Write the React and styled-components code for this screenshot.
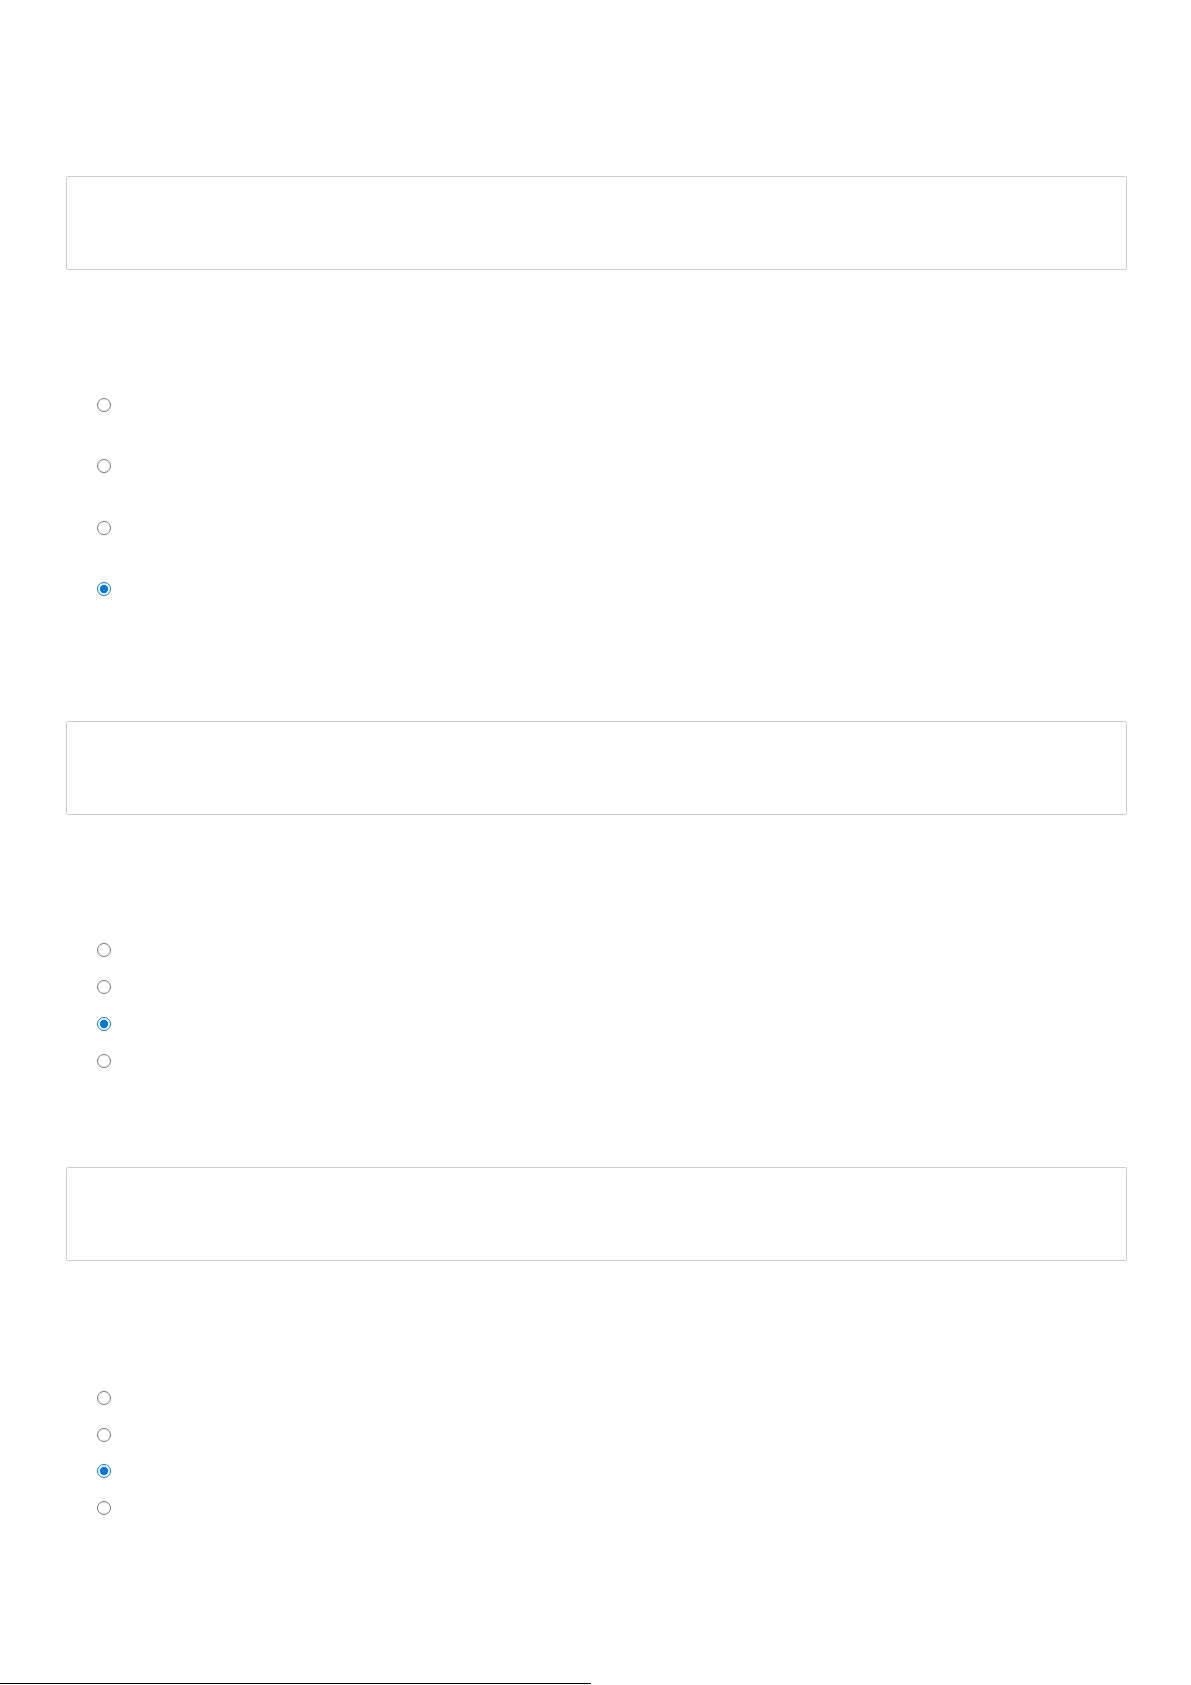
import React from "react";
import styled, { createGlobalStyle } from "styled-components";

const GlobalStyle = createGlobalStyle`
  html, body {
    margin: 0;
    padding: 0;
    background: #fff;
    font-family: "Liberation Sans", Arial, sans-serif;
  }
`;

const Page = styled.div`
  display: flex;
  flex-direction: column;
  padding: 176px 64px 0 66px;
`;

const AnswerBox = styled.div`
  box-sizing: border-box;
  height: 94px;
  border: 1px solid #c9ced8;
  border-radius: 2px;
  background: #fff;
`;

const Options = styled.div`
  display: flex;
  flex-direction: column;
  padding-left: 31px;
  margin-top: ${(p) => p.$top}px;
  margin-bottom: ${(p) => p.$bottom}px;
`;

const OptionRow = styled.label`
  display: flex;
  align-items: center;
  height: ${(p) => p.$h}px;
  color: #fff;
  font-size: 14px;
`;

const Radio = styled.input.attrs({ type: "radio" })`
  width: 14px;
  height: 14px;
  margin: 0;
  accent-color: #0a78d7;
`;

const BottomRule = styled.div`
  width: 591px;
  height: 1px;
  background: #000;
  margin-left: -66px;
`;

const sections = [
  { name: "q1", top: 104, bottom: 101, rowH: 61.5, picked: 3 },
  { name: "q2", top: 116.5, bottom: 87.5, rowH: 37, picked: 2 },
  { name: "q3", top: 118.5, bottom: 156.5, rowH: 36.8, picked: 2 },
];

export default function App() {
  return (
    <>
      <GlobalStyle />
      <Page>
        {sections.map((s) => (
          <React.Fragment key={s.name}>
            <AnswerBox />
            <Options $top={s.top} $bottom={s.bottom}>
              {[0, 1, 2, 3].map((i) => (
                <OptionRow key={i} $h={s.rowH}>
                  <Radio name={s.name} defaultChecked={i === s.picked} />
                </OptionRow>
              ))}
            </Options>
          </React.Fragment>
        ))}
        <BottomRule />
      </Page>
    </>
  );
}
